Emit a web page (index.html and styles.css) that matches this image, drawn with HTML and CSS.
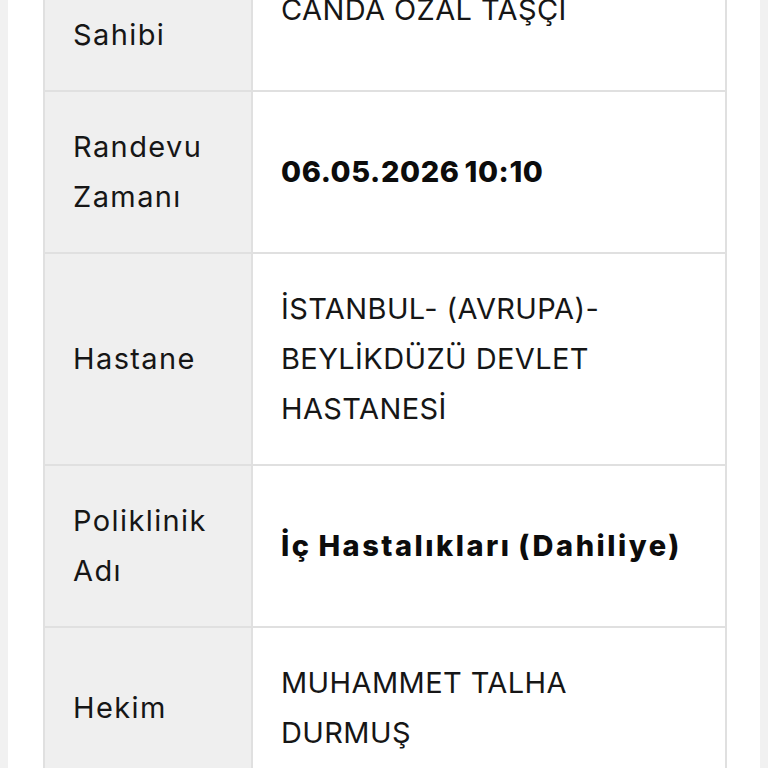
FILE: index.html
```html
<!DOCTYPE html>
<html lang="tr">
<head>
<meta charset="utf-8">
<title>Randevu Bilgileri</title>
<link rel="stylesheet" href="styles.css">
</head>
<body>
<div class="page">
  <table class="info">
    <colgroup><col class="col-label"><col class="col-value"></colgroup>
    <tbody>
      <tr><td class="label">Randevu Sahibi</td><td class="value">CANDA ÖZAL TAŞÇI</td></tr>
      <tr><td class="label">Randevu Zamanı</td><td class="value strong time">06.05.2026 10:10</td></tr>
      <tr><td class="label">Hastane</td><td class="value">İSTANBUL- (AVRUPA)- BEYLİKDÜZÜ DEVLET HASTANESİ</td></tr>
      <tr><td class="label">Poliklinik Adı</td><td class="value strong clinic">İç Hastalıkları (Dahiliye)</td></tr>
      <tr><td class="label">Hekim</td><td class="value">MUHAMMET TALHA DURMUŞ</td></tr>
    </tbody>
  </table>
</div>
</body>
</html>
```
FILE: styles.css
```css
html, body {
  margin: 0;
  padding: 0;
  background: #f1f1f1;
}
body {
  font-family: "Inter", "Noto Sans", sans-serif;
  color: #161616;
  overflow: hidden;
}
.page {
  margin: -72px 8px 0 8px;
  padding: 0 33px 40px 35px;
  background: #ffffff;
}
.info {
  width: 100%;
  table-layout: fixed;
  border-collapse: collapse;
  border: 2px solid #e0e0e0;
}
.col-label { width: 208px; }
.info td {
  border: 2px solid #e0e0e0;
  padding: 30px 20px 30px 28px;
  font-size: 29px;
  line-height: 50px;
  vertical-align: middle;
}
.label {
  background: #efefef;
  font-weight: 400;
  letter-spacing: 1.4px;
}
.value {
  background: #ffffff;
  font-weight: 400;
  letter-spacing: 0.4px;
}
.value.strong {
  font-weight: 800;
  color: #0c0c0c;
}
.value.time {
  letter-spacing: 0.6px;
  word-spacing: -2px;
}
.value.clinic {
  letter-spacing: 2.5px;
  word-spacing: -2px;
}
```
